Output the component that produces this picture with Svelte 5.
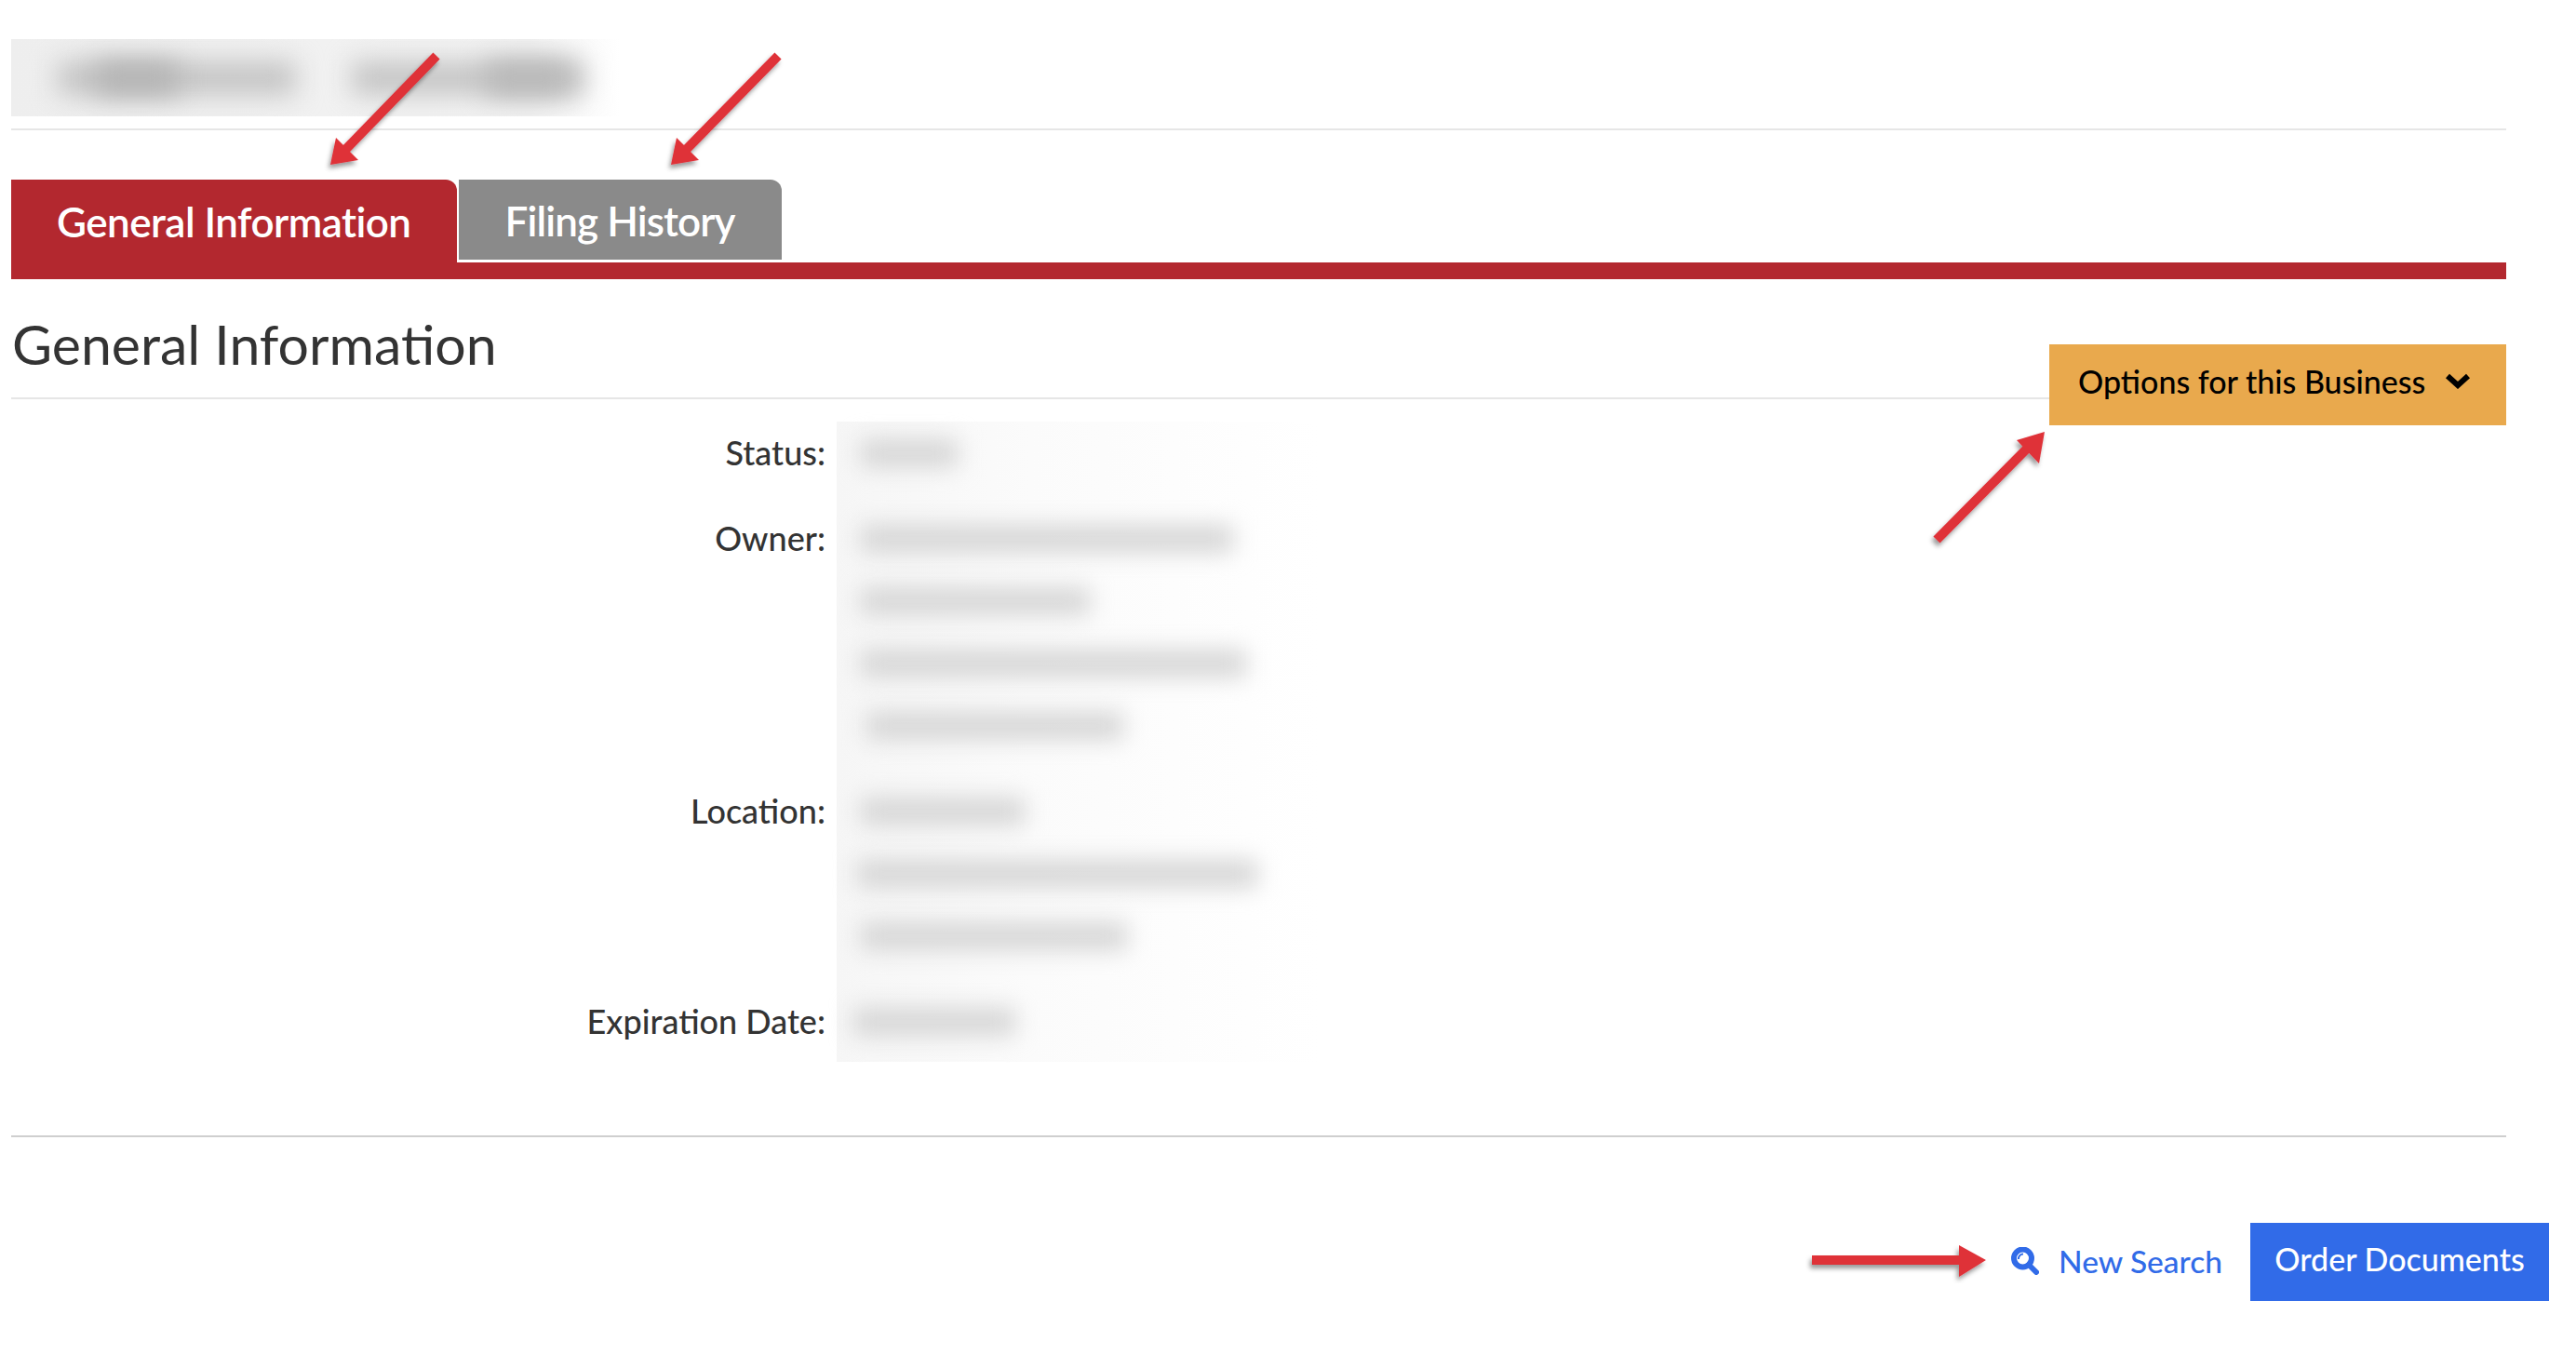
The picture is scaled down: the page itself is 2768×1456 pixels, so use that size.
<script>
  // blurred values: each line is a smear of [left indent, width]
  const rows = [
    { label: "Status", lines: [[26, 104]] },
    { label: "Owner", lines: [[26, 400], [26, 246], [26, 414], [32, 276]] },
    { label: "Location", lines: [[26, 176], [22, 430], [26, 286]] },
    { label: "Expiration Date", lines: [[18, 174]] }
  ];

  const arrows = [
    { tail: "469,60", shaft: "371,161", head: "355,177 361,148 385,172" },
    { tail: "836,60", shaft: "737,161", head: "721,177 727,148 751,172" },
    { tail: "2081,580", shaft: "2180,480", head: "2197,464 2167,473 2191,498" },
    { tail: "1947,1354", shaft: "2108,1354", head: "2134,1354 2105,1338 2105,1372" }
  ];
</script>

<div class="page">
  <header class="title">
    <div class="title-blur">
      <span class="blob one"></span>
      <span class="blob two"></span>
      <span class="blob core-a"></span>
      <span class="blob core-b"></span>
    </div>
  </header>

  <nav class="tabs">
    <button class="tab active">General Information</button>
    <button class="tab">Filing History</button>
  </nav>
  <div class="bar"></div>

  <div class="heading">
    <h2>General Information</h2>
    <button class="options">
      Options for this Business
      <svg viewBox="0 0 28 18" width="28" height="18">
        <path d="M3 4 L14 14 L25 4" fill="none" stroke="#000" stroke-width="6" />
      </svg>
    </button>
  </div>

  <div class="details">
    {#each rows as row}
      <div class="label">{row.label}:</div>
      <div class="value">
        {#each row.lines as line}
          <div class="line">
            <span class="smear" style="margin-left: {line[0]}px; width: {line[1]}px"></span>
          </div>
        {/each}
      </div>
    {/each}
  </div>

  <div class="footer">
    <a class="new-search" href="#search">
      <svg viewBox="0 0 30 30" width="30" height="30">
        <circle cx="12.5" cy="12" r="9.5" fill="none" stroke="#316be8" stroke-width="6" />
        <path d="M19 19 L27 27" stroke="#316be8" stroke-width="6" stroke-linecap="round" />
        <path d="M8 13 A5 5 0 0 1 13 7.5" fill="none" stroke="#316be8" stroke-width="2" />
      </svg>
      New Search
    </a>
    <button class="order">Order Documents</button>
  </div>
</div>

<svg class="arrows" viewBox="0 0 2768 1456" width="2768" height="1456">
  <defs>
    <filter id="shade" x="-20%" y="-20%" width="140%" height="140%">
      <feDropShadow dx="-2" dy="4" stdDeviation="2.5" flood-color="#000" flood-opacity="0.4" />
    </filter>
  </defs>
  {#each arrows as a}
    <g filter="url(#shade)">
      <polyline points="{a.tail} {a.shaft}" stroke="#df3039" stroke-width="10" fill="none" />
      <polygon points={a.head} fill="#df3039" />
    </g>
  {/each}
</svg>

<style>
  :global(body) {
    background: #fff;
    font-family: "Lato", "Open Sans", sans-serif;
    color: #333;
  }

  .page {
    width: 2681px;
    margin-left: 12px;
    padding-top: 42px;
  }

  .title {
    height: 96px;
    border-bottom: 2px solid #e6e6e6;
  }

  .title-blur {
    position: relative;
    overflow: hidden;
    width: 654px;
    height: 83px;
    background: linear-gradient(90deg, #eee 0%, #f3f3f3 85%, #fff 100%);
  }

  .blob {
    position: absolute;
    top: 24px;
    height: 36px;
    background: #c4c4c4;
    filter: blur(14px);
  }

  .blob.one {
    left: 50px;
    width: 256px;
  }

  .blob.two {
    left: 366px;
    width: 250px;
  }

  .blob.core-a {
    left: 90px;
    width: 90px;
    background: #b4b4b4;
  }

  .blob.core-b {
    left: 510px;
    width: 90px;
    background: #b8b8b8;
  }

  .tabs {
    display: flex;
    gap: 2px;
    margin-top: 53px;
    height: 89px;
  }

  .tab {
    border: 0;
    border-radius: 0 12px 0 0;
    padding: 2px 50px 0;
    height: 86px;
    background: #8a8a8a;
    color: #fff;
    font: 600 44px "Lato", sans-serif;
    letter-spacing: -0.9px;
    white-space: nowrap;
  }

  .tab.active {
    height: 89px;
    padding: 0 49px;
    background: #b3282f;
    letter-spacing: -0.55px;
  }

  .bar {
    height: 18px;
    background: #b3282f;
  }

  .heading {
    display: flex;
    justify-content: space-between;
    height: 127px;
    border-bottom: 2px solid #e6e6e6;
  }

  h2 {
    margin: 34px 0 0 1px;
    font-size: 59px;
    font-weight: 400;
    line-height: 72px;
  }

  .options {
    display: flex;
    align-items: center;
    justify-content: space-between;
    box-sizing: border-box;
    align-self: flex-start;
    width: 491px;
    height: 87px;
    margin-top: 70px;
    border: 0;
    padding: 0 38px 9px 31px;
    background: #e9a94d;
    color: #000;
    font: 500 34px "Lato", sans-serif;
    white-space: nowrap;
  }

  .options svg {
    flex-shrink: 0;
  }

  .details {
    display: grid;
    grid-template-columns: 875px 1fr;
    column-gap: 12px;
    margin-top: 24px;
    font-size: 36px;
    font-weight: 500;
    line-height: 67px;
  }

  .label {
    text-align: right;
    padding-bottom: 25px;
  }

  .label:nth-last-child(2) {
    padding-bottom: 10px;
  }

  .value {
    width: 520px;
    padding-bottom: 25px;
    background: linear-gradient(90deg, #f6f6f6 0%, #fbfbfb 40%, #fff 100%);
  }

  .value:last-child {
    padding-bottom: 10px;
  }

  .line {
    display: flex;
    align-items: center;
    height: 67px;
  }

  .smear {
    height: 30px;
    background: #d6d6d6;
    filter: blur(12px);
  }

  .footer {
    position: relative;
    display: flex;
    justify-content: flex-end;
    align-items: center;
    gap: 30px;
    margin-top: 79px;
    margin-right: -46px;
    padding-top: 94px;
  }

  .footer::before {
    content: "";
    position: absolute;
    top: 0;
    left: 0;
    right: 46px;
    height: 2px;
    background: #cfcfcf;
  }

  .new-search {
    display: flex;
    align-items: center;
    gap: 21px;
    padding-bottom: 3px;
    color: #316be8;
    font-size: 33.5px;
    font-weight: 500;
    text-decoration: none;
  }

  .order {
    width: 321px;
    height: 84px;
    border: 0;
    padding: 0 0 8px;
    background: #316be8;
    color: #fff;
    font: 500 34px "Lato", sans-serif;
    white-space: nowrap;
  }

  .arrows {
    position: absolute;
    top: 0;
    left: 0;
    pointer-events: none;
  }
</style>
